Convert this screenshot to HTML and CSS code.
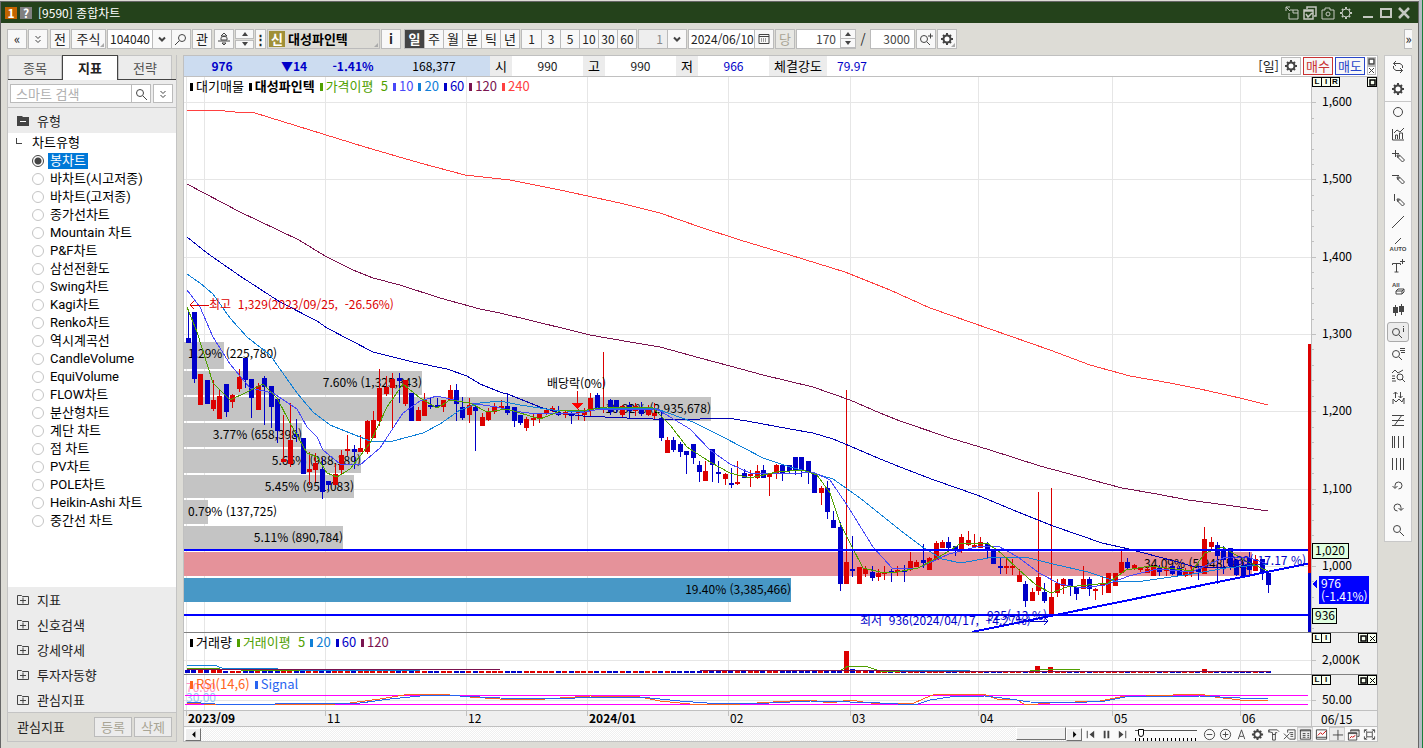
FILE: index.html
```html
<!DOCTYPE html>
<html lang="ko">
<head>
    <meta charset="UTF-8">
    <meta name="viewport" content="width=device-width, initial-scale=1.0">
    <title>[9590] 종합차트</title>
    <link rel="stylesheet" href="styles.css">
</head>
<body>
    <svg class="defs" width="0" height="0">
        <symbol id="gear" viewBox="0 0 14 14"><path d="M7 1v12M1 7h12M3 3l8 8M11 3l-8 8" stroke-width="2"/><circle cx="7" cy="7" r="3.5" stroke-width="2" fill="#fff"/></symbol>
        <symbol id="lens" viewBox="0 0 14 14"><circle cx="6" cy="6" r="3.5"/><path d="M9 9l4 4"/></symbol>
        <symbol id="down" viewBox="0 0 14 14"><path d="M4 5.5l3 3 3-3" stroke-width="2"/></symbol>
        <symbol id="fold" viewBox="0 0 14 14"><path d="M4.500 4l2.500 2.500L9.500 4M4.500 8l2.500 2.500L9.500 8"/></symbol>
        <symbol id="pencil" viewBox="0 0 14 14"><path d="M6 6l2.500 0 5 5-2 2-5-5zM6 8h2v-2"/></symbol>
        <symbol id="folder" viewBox="0 0 12 12"><path d="M.5 1.500h4l1 1h6v8h-11zM3 6.500h6M6 3.500v6"/></symbol>
        <symbol id="max" viewBox="0 0 9 9"><path d="M2 2h5v5H2z" stroke-width="1.500"/></symbol>
        <symbol id="close" viewBox="0 0 9 9"><path d="M2 2l5 5M7 2L2 7"/></symbol>
        <symbol id="up" viewBox="0 0 8 6"><path class="solid" d="M1 5l3-4 3 4z"/></symbol>
        <symbol id="dn" viewBox="0 0 8 6"><path class="solid" d="M1 1l3 4 3-4z"/></symbol>
    </svg>

    <div class="window">
        <header class="titlebar">
            <span class="badge orange">1</span>
            <span class="badge gray">?</span>
            <h1>[9590] 종합차트</h1>
            <div class="title-icons">
                <button aria-label="분리"><svg viewBox="0 0 14 14"><path d="M1 1l4 4M1 5V1h4M5 4h8v9H4V7M8 4v3h5"/></svg></button>
                <button aria-label="목록"><svg viewBox="0 0 14 14"><path d="M4 3V1h9v9h-2M1 4h9v9H1zM1 5h9M3 8l2 3 4-4" stroke-width="1.500"/></svg></button>
                <button aria-label="캡쳐"><svg viewBox="0 0 14 14"><path d="M1 4h3V2h5v2h4v9H1z"/><circle cx="7" cy="8" r="2"/></svg></button>
                <button aria-label="설정"><svg viewBox="0 0 14 14"><circle cx="7" cy="7" r="4"/><path d="M7 1v2M7 11v2M1 7h2M11 7h2M3 3l1 1M11 3l-1 1M3 11l1-1M11 11l-1-1" stroke-width="2"/></svg></button>
                <button class="win" aria-label="최소화"><svg viewBox="0 0 14 14"><path d="M2 11h10" stroke-width="2"/></svg></button>
                <button aria-label="최대화"><svg viewBox="0 0 14 14"><path d="M2 3h10v8H2z" stroke-width="2"/></svg></button>
                <button aria-label="닫기"><svg viewBox="0 0 14 14"><path d="M2 2l10 10M12 2L2 12" stroke-width="2.500"/></svg></button>
            </div>
        </header>

        <div class="toolbar">
            <button class="tb">«</button>
            <button class="tb" aria-label="펼치기"><svg><use href="#fold"/></svg></button>
            <button class="tb gap">전</button>
            <button class="tb wide corner">주식</button>
            <div class="field">
                <input class="code" type="text" value="104040" aria-label="종목코드">
                <button aria-label="종목목록"><svg><use href="#down"/></svg></button>
                <button aria-label="종목검색"><svg class="flip"><use href="#lens"/></svg></button>
            </div>
            <button class="tb">관</button>
            <button class="tb gap" aria-label="알림"><svg viewBox="0 0 14 14"><path d="M7 1L4 4h6zM4 6c0-2 6-2 6 0v2H4zM1 9h12M5 11h4l-2 2z"/></svg></button>
            <div class="spin"><button aria-label="이전"><svg><use href="#up"/></svg></button><button aria-label="다음"><svg><use href="#dn"/></svg></button></div>
            <button class="tb thin">⋮</button>
            <div class="stock corner"><span>신</span><b>대성파인텍</b></div>
            <button class="tb"><b>i</b></button>
            <div class="group">
                <button class="on">일</button><button>주</button><button>월</button><button>분</button><button>틱</button><button>년</button>
            </div>
            <div class="group mins">
                <button>1</button><button>3</button><button>5</button><button>10</button><button>30</button><button>60</button>
            </div>
            <div class="field">
                <select aria-label="주기" disabled><option>1</option></select>
                <button aria-label="주기목록"><svg><use href="#down"/></svg></button>
            </div>
            <div class="field">
                <input class="date" type="text" value="2024/06/10" aria-label="조회일자">
                <button aria-label="달력"><svg viewBox="0 0 14 14"><path d="M2 2.500h10v9H2zM2 4.500h10"/><path d="M4 7h6M4 9h6" stroke-dasharray="1 1"/></svg></button>
            </div>
            <button class="tb" disabled>당</button>
            <div class="field">
                <input class="count" type="text" value="170" aria-label="봉개수">
                <div class="spin small"><button aria-label="증가"><svg><use href="#up"/></svg></button><button aria-label="감소"><svg><use href="#dn"/></svg></button></div>
            </div>
            <span class="slash">/</span>
            <div class="field"><input class="total" type="text" value="3000" aria-label="전체개수"></div>
            <button class="tb" aria-label="확대"><svg viewBox="0 0 14 14"><circle cx="5" cy="7" r="3.500"/><path d="M8 10l3 3M9 4h5M11.500 1.500v5"/></svg></button>
            <button class="tb corner" aria-label="설정"><svg><use href="#gear"/></svg></button>
            <button class="tb more">»</button>
        </div>

        <main>
            <aside class="side">
                <div class="tabs">
                    <button>종목</button><button class="on">지표</button><button>전략</button>
                </div>
                <div class="search">
                    <input type="text" placeholder="스마트 검색" aria-label="스마트 검색">
                    <button aria-label="검색"><svg><use href="#lens"/></svg></button>
                    <button class="fold" aria-label="펼치기"><svg><use href="#fold"/></svg></button>
                </div>
                <div class="side-head"><svg viewBox="0 0 12 12"><path class="solid" d="M0 1h5l1 1h6v9H0z"/><path d="M3 6.500h6" stroke="#fff"/></svg>유형</div>
                <div class="tree">
                    <p>차트유형</p>
                    <label><input type="radio" name="kind" checked><span>봉차트</span></label>
                    <label><input type="radio" name="kind"><span>바차트(시고저종)</span></label>
                    <label><input type="radio" name="kind"><span>바차트(고저종)</span></label>
                    <label><input type="radio" name="kind"><span>종가선차트</span></label>
                    <label><input type="radio" name="kind"><span>Mountain 차트</span></label>
                    <label><input type="radio" name="kind"><span>P&amp;F차트</span></label>
                    <label><input type="radio" name="kind"><span>삼선전환도</span></label>
                    <label><input type="radio" name="kind"><span>Swing차트</span></label>
                    <label><input type="radio" name="kind"><span>Kagi차트</span></label>
                    <label><input type="radio" name="kind"><span>Renko차트</span></label>
                    <label><input type="radio" name="kind"><span>역시계곡선</span></label>
                    <label><input type="radio" name="kind"><span>CandleVolume</span></label>
                    <label><input type="radio" name="kind"><span>EquiVolume</span></label>
                    <label><input type="radio" name="kind"><span>FLOW차트</span></label>
                    <label><input type="radio" name="kind"><span>분산형차트</span></label>
                    <label><input type="radio" name="kind"><span>계단 차트</span></label>
                    <label><input type="radio" name="kind"><span>점 차트</span></label>
                    <label><input type="radio" name="kind"><span>PV차트</span></label>
                    <label><input type="radio" name="kind"><span>POLE차트</span></label>
                    <label><input type="radio" name="kind"><span>Heikin-Ashi 차트</span></label>
                    <label><input type="radio" name="kind"><span>중간선 차트</span></label>
                </div>
                <button class="folder"><svg><use href="#folder"/></svg>지표</button>
                <button class="folder"><svg><use href="#folder"/></svg>신호검색</button>
                <button class="folder"><svg><use href="#folder"/></svg>강세약세</button>
                <button class="folder"><svg><use href="#folder"/></svg>투자자동향</button>
                <button class="folder"><svg><use href="#folder"/></svg>관심지표</button>
                <div class="side-foot"><span>관심지표</span><button disabled>등록</button><button disabled>삭제</button></div>
            </aside>

            <section class="chart">
                <div class="quote">
                    <div class="price"><b>976</b><b>▼14</b><b>-1.41%</b><span>168,377</span></div>
                    <span class="name">시</span><span class="val">990</span>
                    <span class="name">고</span><span class="val">990</span>
                    <span class="name">저</span><span class="val blue">966</span>
                    <span class="name long">체결강도</span><span class="val blue left">79.97</span>
                    <div class="trade">
                        <span>[일]</span>
                        <button aria-label="차트설정"><svg><use href="#gear"/></svg></button>
                        <button class="buy">매수</button>
                        <button class="sell">매도</button>
                        <div class="pair"><button aria-label="최대화"><svg><use href="#max"/></svg></button><button aria-label="닫기"><svg><use href="#close"/></svg></button></div>
                    </div>
                </div>
                <div class="pane price-pane">
                    <svg id="price"></svg>
                    <svg id="priceAxis"></svg>
                    <div class="legend"><span class="c-black">대기매물</span><b class="c-black">대성파인텍</b><span class="c-green">가격이평&nbsp; 5</span><span class="c-violet">10</span><span class="c-sky">20</span><span class="c-navy">60</span><span class="c-wine">120</span><span class="c-red">240</span></div>
                    <div class="lir"><button>L</button><button>I</button><button>R</button><i></i><button aria-label="최대화"><svg><use href="#max"/></svg></button></div>
                </div>
                <div class="pane vol-pane">
                    <svg id="volume"></svg>
                    <svg id="volumeAxis"></svg>
                    <div class="legend"><span class="c-black">거래량</span><span class="c-green">거래이평&nbsp; 5</span><span class="c-sky">20</span><span class="c-navy">60</span><span class="c-wine">120</span></div>
                    <div class="lir"><button>L</button><button>I</button><i></i><button aria-label="최대화"><svg><use href="#max"/></svg></button><button aria-label="닫기"><svg><use href="#close"/></svg></button></div>
                </div>
                <div class="pane rsi-pane">
                    <svg id="rsi"></svg>
                    <svg id="rsiAxis"></svg>
                    <div class="legend"><span class="c-orange">RSI(14,6)</span><span class="c-blue">Signal</span></div>
                    <div class="lir"><button>L</button><button>I</button><i></i><button aria-label="최대화"><svg><use href="#max"/></svg></button><button aria-label="닫기"><svg><use href="#close"/></svg></button></div>
                </div>
                <div class="pane dates">
                    <svg id="dates"></svg>
                    <span>06/15</span>
                </div>
                <div class="scroll">
                    <button class="arrow" aria-label="왼쪽"><svg viewBox="0 0 14 14"><path class="solid" d="M9 3.500v7L5.500 7z"/></svg></button>
                    <div class="track"><div class="thumb"></div></div>
                    <button class="arrow" aria-label="오른쪽"><svg viewBox="0 0 14 14"><path class="solid" d="M5.500 3.500v7L9 7z"/></svg></button>
                    <button aria-label="처음"><svg viewBox="0 0 14 14"><path d="M3.500 3v8"/><path class="solid" d="M11 3v8L6 7z"/></svg></button>
                    <button aria-label="정지"><svg viewBox="0 0 14 14"><path d="M5 3v8M9 3v8" stroke-width="2"/></svg></button>
                    <button aria-label="끝"><svg viewBox="0 0 14 14"><path d="M10.500 3v8"/><path class="solid" d="M3 3v8l5-4z"/></svg></button>
                    <input type="range" min="0" max="20" value="1" aria-label="속도">
                    <button aria-label="축소"><svg viewBox="0 0 14 14"><circle cx="7" cy="7" r="5.500"/><path d="M4 7h6"/></svg></button>
                    <button aria-label="확대"><svg viewBox="0 0 14 14"><circle cx="7" cy="7" r="5.500"/><path d="M4 7h6M7 4v6"/></svg></button>
                    <button aria-label="글자"><svg viewBox="0 0 14 14"><path d="M3.500 12L7 2l3.500 10M5 9h4"/></svg></button>
                    <button aria-label="설정"><svg><use href="#gear"/></svg></button>
                    <button aria-label="도구"><svg viewBox="0 0 14 14"><path d="M2 5V2h9l2 2M2 2v2l4 1v8h3V5h2M9 7H6"/></svg></button>
                    <button aria-label="엑셀"><svg viewBox="0 0 14 14"><path d="M5 5V2h8v10H7M7 5h4M8 7h3M8 9h3M1 6l6 6M7 6l-6 6"/></svg></button>
                    <button class="on" aria-label="표"><svg viewBox="0 0 14 14"><path d="M1.500 2h11v10h-11zM1 3h12M4 6h3M4 8h3M4 10h3M9 6h2M9 8h2M9 10h2"/></svg></button>
                    <button aria-label="수식"><svg viewBox="0 0 14 14"><path d="M1.500 2h11v10h-11zM1 10h12"/><path d="M3 8l3-3 2 2 4-4" stroke="#c00"/></svg></button>
                    <button class="on" aria-label="십자선"><svg viewBox="0 0 14 14"><path d="M7.500 2v11M2 7.500h11"/></svg></button>
                    <button aria-label="복사"><svg viewBox="0 0 14 14"><path d="M4 4V2h9v7h-2M4 3h9M1.500 5h9v8h-9zM1 6h10"/><path d="M3 11l2-2 1 1 3-2" stroke="#c00"/></svg></button>
                    <button aria-label="전체화면"><svg viewBox="0 0 14 14"><path d="M1.500 5V2h3M9.500 2h3v3M12.500 9v3h-3M4.500 12h-3V9M4 4.500h6v5H4zM2 2l2 2M12 2l-2 2M2 12l2-2M12 12l-2-2"/></svg></button>
                </div>
            </section>

            <nav class="tools">
                <button aria-label="새로고침"><svg viewBox="0 0 14 14"><path d="M5 1L2.500 3.500 5 6M2.500 3.500H9l2.500 2V8M2.500 6v2.500l2.500 2h6.500M9 8l2.500 2.500L9 13"/></svg></button>
                <button aria-label="설정"><svg><use href="#gear"/></svg></button>
                <hr>
                <button aria-label="원"><svg viewBox="0 0 14 14"><circle cx="7" cy="7" r="4.500"/></svg></button>
                <button aria-label="지표추가"><svg viewBox="0 0 14 14"><path d="M1.500 2v11H13M3 6l3-3 3 2 4-4M4.500 12V8h2v4M8.500 12V6h3v6"/></svg></button>
                <button aria-label="십자선 긋기"><svg viewBox="0 0 14 14"><path d="M1 4.500h7M4.500 1v7"/><use href="#pencil"/></svg></button>
                <button aria-label="수평선"><svg viewBox="0 0 14 14"><path d="M1 4.500h7"/><use href="#pencil"/></svg></button>
                <button aria-label="수직선"><svg viewBox="0 0 14 14"><path d="M3.500 1v7"/><use href="#pencil"/></svg></button>
                <button aria-label="추세선"><svg viewBox="0 0 14 14"><path d="M1 13L13 1"/></svg></button>
                <button aria-label="자동추세선"><svg class="auto" viewBox="0 0 18 14"><path d="M6 7l6-6"/><text x="9" y="14" text-anchor="middle">AUTO</text></svg></button>
                <button aria-label="텍스트"><svg viewBox="0 0 14 14"><path d="M1.500 6V4.500h8V6M5.500 4.500V13M3.500 13h4M9 2.500h5M11.500 0v5"/></svg></button>
                <button aria-label="전체삭제"><svg viewBox="0 0 14 14"><text x="1" y="6">All</text><path d="M7 8h6v3l-2 2H5v-3zM5 10h6v3M11 10l2-2"/></svg></button>
                <button aria-label="봉"><svg viewBox="0 0 14 14"><path d="M4.500 2v11M10.500 1v11"/><path class="solid" d="M2 4h5v6H2zM8 3h5v6H8z"/></svg></button>
                <button class="on" aria-label="정보"><svg viewBox="0 0 14 14"><circle cx="5" cy="7" r="3.500"/><path d="M8 10l3 3M12.500 1v1M12.500 3v4"/></svg></button>
                <button aria-label="목록검색"><svg viewBox="0 0 14 14"><circle cx="5" cy="7" r="3.500"/><path d="M8 10l3 3M9 1.500h5M9 3.500h5M10 5.500h4"/></svg></button>
                <button aria-label="차트검색"><svg viewBox="0 0 14 14"><path d="M1 4l3-3 3 3 5-3M1 7h3M1 9.500h3M1 12h4"/><circle cx="9" cy="8" r="3"/><path d="M11 10l3 3"/></svg></button>
                <button aria-label="상하"><svg viewBox="0 0 14 14"><path d="M2 13V8l3 3 3-3 3 3 2-4v6M4.500 1v6M2.500 3l2-2 2 2M9.500 1v6M7.500 5l2 2 2-2"/></svg></button>
                <button aria-label="피보나치"><svg viewBox="0 0 14 14"><path d="M1 2.500h12M1 7.500h12M1 12.500h12M11 2L3 13"/></svg></button>
                <button aria-label="시간대"><svg viewBox="0 0 14 14"><path d="M1.500 1v12M3.500 1v12M7.500 1v12M12.500 1v12"/></svg></button>
                <button aria-label="등간격"><svg viewBox="0 0 14 14"><path d="M1.500 1v12M5.500 1v12M9.500 1v12M12.500 1v12"/></svg></button>
                <button aria-label="되돌리기"><svg viewBox="0 0 14 14"><path d="M4 9V6.500A3.500 3.500 0 1 1 7.500 10M1.500 7l2.500 2.500L6.500 7"/></svg></button>
                <button aria-label="다시실행"><svg viewBox="0 0 14 14"><path d="M10 9V6.500A3.500 3.500 0 1 0 6.500 10M7.500 7l2.500 2.500L12.500 7"/></svg></button>
                <button aria-label="돋보기"><svg><use href="#lens"/></svg></button>
            </nav>
        </main>
    </div>
    <script src="chart.js"></script>
</body>
</html>
```
FILE: styles.css
```css
* {
    box-sizing: border-box;
}
body {
    margin: 0;
    height: 100vh;
    padding: 1px 4px 0 0;
    background: linear-gradient(to left, #18803c 1px, #b4bcc4 1px, #b4bcc4 4px, #dddcd6 4px);
    font-family: "Noto Sans CJK KR", sans-serif;
    font-size: 13px;
    line-height: 16px;
    color: #222;
}
button, input, select {
    font: inherit;
    color: inherit;
    margin: 0;
    padding: 0;
    border: 0;
    border-radius: 0;
    background: none;
}
button {
    display: flex;
    align-items: center;
    justify-content: center;
    white-space: nowrap;
}
svg {
    fill: none;
    stroke: #444;
    stroke-width: 1;
    width: 14px;
    height: 14px;
    flex: none;
}
.solid {
    fill: #444;
    stroke: none;
}
.defs {
    position: absolute;
}
.window {
    height: 100%;
    display: flex;
    flex-direction: column;
    background: #dddcd6;
    border: 1px solid #666;
    border-width: 1px 1px 0 1px;
}

/* title bar */
.titlebar {
    height: 21px;
    display: flex;
    align-items: center;
    gap: 3px;
    padding: 0 7px 0 4px;
    background: #24421b;
    color: #fff;
}
.badge {
    width: 12px;
    height: 12px;
    line-height: 12px;
    text-align: center;
    font-weight: bold;
    font-size: 12px;
}
.orange {
    background: #c46400;
}
.gray {
    background: #808080;
}
h1 {
    margin: 0 0 0 3px;
    font-size: 12px;
    font-weight: normal;
}
.title-icons {
    margin-left: auto;
    display: flex;
    gap: 4px;
}
.title-icons svg {
    stroke: #c4c8c0;
}
.title-icons .win {
    margin-left: 4px;
}

/* toolbar */
.toolbar {
    height: 32px;
    display: flex;
    align-items: center;
    gap: 1px;
    padding-left: 6px;
    flex: none;
}
.tb, .field, .stock, .group {
    height: 20px;
    background: #f8f8f8;
    border: 1px solid #bbb;
    flex: none;
}
.tb {
    width: 20px;
}
.tb:disabled {
    color: #a8a494;
    background: #e8e8e4;
}
.gap {
    margin-left: 1px;
}
.wide {
    width: 35px;
}
.thin {
    width: 11px;
    font-weight: bold;
}
.corner {
    position: relative;
}
.corner::after {
    content: "";
    position: absolute;
    right: 1px;
    bottom: 1px;
    border: 2px solid #aaa;
    border-left-color: transparent;
    border-top-color: transparent;
}
.field, .group {
    display: flex;
    background: #fff;
}
.field > button, .group button {
    width: 19px;
    border-left: 1px solid #bbb;
    background: #f8f8f8;
}
.field {
    font-size: 12px;
}
.group {
    margin-left: 2px;
}
.mins {
    margin-left: 0;
    font-size: 12px;
}
.group button:first-child {
    border-left: 0;
}
.group .on {
    background: #444;
    color: #fff;
    font-weight: bold;
}
.code {
    width: 44px;
    padding-left: 2px;
}
.flip {
    transform: scaleX(-1);
}
.date {
    width: 65px;
    padding-left: 2px;
}
.count, .total {
    width: 43px;
    padding-right: 4px;
    text-align: right;
    color: #444;
}
.field select {
    appearance: none;
    width: 28px;
    padding-right: 4px;
    text-align: right;
    text-align-last: right;
    background: #eee;
    color: #888;
    opacity: 1;
}
.spin {
    width: 19px;
    height: 20px;
    display: flex;
    flex-direction: column;
    gap: 1px;
    flex: none;
}
.spin button {
    height: 9px;
    flex: 1;
    background: #f8f8f8;
    border: 1px solid #bbb;
}
.spin svg {
    width: 8px;
    height: 6px;
}
.small {
    width: 15px;
    height: 18px;
    gap: 0;
}
.small button {
    border-width: 0 0 1px 1px;
}
.stock {
    width: 113px;
    display: flex;
    align-items: center;
    gap: 3px;
    padding-left: 1px;
    background: #dddcd6;
    color: #000;
}
.stock span {
    width: 16px;
    height: 16px;
    background: #a09038;
    color: #fff;
    text-align: center;
    font-weight: bold;
}
.slash {
    width: 12px;
    text-align: center;
}
.more {
    width: 8px;
    margin-left: auto;
    margin-right: 6px;
    border-right: 0;
}

main {
    flex: 1;
    min-height: 0;
    display: flex;
    gap: 6px;
    padding: 0 6px 6px;
}

/* left panel */
.side {
    width: 170px;
    display: flex;
    flex-direction: column;
    border: 1px solid #c4c4c4;
    border-top: 0;
    background: #ececec;
    flex: none;
}
.tabs {
    height: 25px;
    display: flex;
    background: #dddcd6;
    border-bottom: 1px solid #444;
    flex: none;
}
.tabs button {
    width: 54px;
    background: #ececec;
    border: 1px solid #c4c4c4;
    border-bottom: 0;
    color: #555;
}
.tabs .on {
    width: 56px;
    height: 25px;
    background: #fff;
    border-color: #444;
    color: #222;
    font-weight: bold;
}
.search {
    height: 28px;
    display: flex;
    padding: 4px 3px 4px 2px;
    border-bottom: 1px solid #c4c4c4;
    flex: none;
}
.search input {
    width: 122px;
    padding-left: 5px;
    background: #fff;
    border: 1px solid #bbb;
}
.search input::placeholder {
    color: #b0b0b0;
}
.search button {
    width: 20px;
    border: 1px solid #bbb;
    border-left: 0;
    background: #fff;
}
.search .fold {
    margin-left: 2px;
    border-left: 1px solid #bbb;
}
.side-head, .folder {
    height: 25px;
    display: flex;
    align-items: center;
    justify-content: flex-start;
    gap: 8px;
    padding-left: 9px;
    flex: none;
}
.side-head svg, .folder svg {
    width: 12px;
    height: 12px;
}
.tree {
    flex: 1;
    min-height: 0;
    padding-top: 1px;
    overflow: hidden;
    background: #fff;
    font-family: Roboto, "Noto Sans CJK KR", sans-serif;
    color: #000;
}
.tree p {
    position: relative;
    margin: 0;
    padding-left: 24px;
    line-height: 18px;
}
.tree p::before {
    content: "";
    position: absolute;
    left: 8px;
    top: 4px;
    width: 5px;
    height: 5px;
    border: 1px solid #444;
    border-width: 0 0 1px 1px;
}
.tree label {
    height: 18px;
    display: flex;
    align-items: center;
    gap: 4px;
    padding-left: 24px;
}
.tree span {
    padding: 0 2px;
}
.tree input {
    appearance: none;
    width: 12px;
    height: 12px;
    border: 1px solid #c4c4c4;
    border-radius: 50%;
}
.tree input:checked {
    border-color: #444;
    background: radial-gradient(#444 3px, #fff 4px);
}
.tree input:checked + span {
    background: #0078d7;
    color: #fff;
}
.side-foot {
    height: 29px;
    display: flex;
    align-items: center;
    gap: 2px;
    padding: 0 4px 0 9px;
    background: #dddcd6;
    border-top: 1px solid #c4c4c4;
    flex: none;
}
.side-foot span {
    flex: 1;
}
.side-foot button {
    width: 38px;
    height: 20px;
    border: 1px solid #bbb;
    background: #ececec;
    color: #a8a494;
}

/* chart */
.chart {
    flex: 1;
    min-width: 0;
    display: flex;
    flex-direction: column;
    border: 1px solid #c0c0c0;
    background: #fff;
}
.quote {
    height: 21px;
    display: flex;
    border-bottom: 1px solid #c0c0c0;
    font-size: 12px;
    line-height: 20px;
    text-align: center;
    flex: none;
}
.price {
    width: 306px;
    display: grid;
    grid-template-columns: 76px 68px 50px 112px;
    background: #ccdcf0;
    color: #000;
}
.price b, .blue {
    color: #0000c8;
}
.name {
    width: 22px;
    background: #ececec;
    font-size: 13px;
    color: #000;
}
.val {
    width: 71px;
}
.long {
    width: 58px;
}
.left {
    text-align: left;
    padding-left: 10px;
}
.trade {
    margin-left: auto;
    display: flex;
    align-items: center;
    gap: 2px;
    padding-right: 1px;
    font-size: 13px;
}
.trade > button {
    width: 30px;
    height: 18px;
    border: 1px solid #bbb;
    background: #f8f8f8;
}
.trade > button:nth-child(2) {
    width: 20px;
}
.trade .buy {
    border-color: #c83232;
    color: #c83232;
}
.trade .sell {
    border-color: #2846c8;
    color: #2846c8;
}
.pair button {
    width: 9px;
    height: 9px;
    border: 1px solid #bbb;
}
.pair svg, .lir svg {
    width: 9px;
    height: 9px;
}
.pane {
    position: relative;
    display: grid;
    grid-template-columns: 1fr 66px;
    flex: none;
}
.pane > svg {
    width: 100%;
    height: 100%;
    min-height: 0;
    stroke: none;
    overflow: hidden;
    shape-rendering: crispEdges;
}
.pane > svg:nth-child(2) {
    background: #efefef;
    border-left: 1px solid #c0c0c0;
}
.pane text {
    font-size: 12px;
    fill: #000;
}
.price-pane {
    flex: 1;
    min-height: 0;
}
.vol-pane {
    height: 42px;
    border-top: 1px solid #808080;
}
.rsi-pane {
    height: 36px;
    border-top: 1px solid #808080;
}
.legend {
    position: absolute;
    left: 6px;
    top: 1px;
    display: flex;
    gap: 5px;
    color: #000;
}
.legend > *::before {
    content: "";
    display: inline-block;
    width: 3px;
    height: 8px;
    margin-right: 3px;
    background: currentColor;
}
.c-black { color: #000; }
.c-green { color: #50a000; }
.c-violet { color: #4848f8; }
.c-sky { color: #1080d8; }
.c-navy { color: #0000c8; }
.c-wine { color: #7a1450; }
.c-red { color: #ff4040; }
.c-orange { color: #ff6420; }
.c-blue { color: #2864f0; }
.lir {
    position: absolute;
    right: 0;
    top: 0;
    width: 65px;
    display: flex;
}
.lir button {
    width: 10px;
    height: 10px;
    margin-right: -1px;
    border: 1px solid #000;
    background: #f8fff0;
    font-family: "Liberation Sans", sans-serif;
    font-size: 8px;
    font-weight: bold;
    line-height: 8px;
    color: #000;
}
.lir svg {
    stroke: #000;
}
.lir button:last-child {
    margin-right: 0;
}
.lir i {
    flex: 1;
}
.dates {
    height: 17px;
    background: #efefef;
    border-top: 1px solid #c0c0c0;
    border-bottom: 1px solid #c0c0c0;
    font-size: 12px;
    line-height: 15px;
}
.pane > #dates {
    overflow: visible;
}
.dates span {
    padding-left: 9px;
    border-left: 1px solid #c0c0c0;
    color: #000;
}
.scroll {
    height: 14px;
    display: flex;
    align-items: center;
    padding-left: 1px;
    background: #fafafa;
    flex: none;
}
.scroll button {
    width: 16px;
    height: 14px;
}
.scroll svg {
    width: 13px;
    height: 13px;
}
.scroll .on {
    background: #ececec;
    border: 1px solid #ccc;
}
.scroll .arrow, .thumb {
    height: 13px;
    background: #efefef;
    border: 1px solid #fff;
    border-right-color: #707070;
    border-bottom-color: #707070;
}
.arrow .solid {
    fill: #000;
}
.track {
    flex: 1;
    height: 14px;
    background: repeating-conic-gradient(#efefef 0 25%, #fff 0 50%) 0 0 / 2px 2px;
}
.thumb {
    width: 50px;
    margin-left: auto;
}
.scroll input {
    appearance: none;
    width: 62px;
    height: 14px;
    margin: 0 4px 0 5px;
    background: linear-gradient(#555, #555) 0 3px / 100% 1px no-repeat, repeating-linear-gradient(to right, #000 0 1px, transparent 1px 4px) 0 100% / 100% 3px no-repeat;
}
.scroll input::-webkit-slider-thumb {
    appearance: none;
    width: 6px;
    height: 8px;
    margin-top: -3px;
    background: #fff;
    border: 1px solid #000;
    border-radius: 0 0 3px 3px;
}

/* drawing tools */
.tools {
    width: 28px;
    align-self: flex-start;
    padding: 1px 0;
    background: #fafafa;
    border: 1px solid #c8c8c8;
    flex: none;
}
.tools button {
    width: 22px;
    height: 20px;
    margin: 0 2px 2px;
    border: 1px solid transparent;
    border-radius: 3px;
}
.tools button:last-child {
    margin-bottom: 0;
}
.tools .on {
    border-color: #aaa;
    background: #ececec;
}
.tools hr {
    margin: 0;
    border: 0;
    border-top: 1px solid #c8c8c8;
}
.tools .auto {
    width: 18px;
}
.tools text {
    font-family: "Liberation Sans", sans-serif;
    font-size: 6px;
    font-weight: bold;
    fill: #444;
    stroke: none;
}
```
FILE: chart.js
```js
// Base grid of the drawing. Everything is scaled from it to the real pane size.
const BASE = { left: 184, width: 1127, top: 77, height: 555 };

const RED = '#dc0000';
const BLUE = '#0000c8';
const months = [186, 204, 325, 466, 587, 728, 850, 978, 1112, 1240];

// direction, high, body top, body bottom, low
const candles = `B 312 338 343 343|B 312 312 379 383|R 374 374 405 405|B 380 380 404 404|R 380 400 409 411|R 389 396 419 419|B 384 384 412 417|R 394 395 402 408|R 369 377 389 392|B 358 358 380 388
B 379 379 398 418|R 383 386 410 410|B 376 378 387 425|B 386 386 407 428|B 399 399 431 443|R 415 459 462 462|R 403 440 464 467|B 419 434 437 442|B 438 438 474 474|R 452 469 472 485
R 453 463 470 482|B 458 469 492 499|B 481 481 485 490|R 464 474 485 485|R 450 455 470 475|R 435 449 451 456|B 445 449 452 469|R 435 448 452 452|R 420 421 452 454|R 411 420 438 438
R 369 388 421 426|R 376 387 394 396|R 373 379 388 430|B 373 378 381 403|R 380 380 404 406|B 393 393 421 421|R 407 410 421 421|R 393 400 416 416|B 397 405 407 409|B 398 405 407 407
R 400 400 407 412|R 385 390 401 401|B 384 390 404 421|B 397 407 418 420|R 398 405 415 423|B 406 407 411 451|R 413 417 426 426|R 408 411 420 421|R 403 406 412 414|R 400 406 407 410
B 393 406 413 415|B 407 407 421 427|B 415 415 423 425|R 417 419 428 431|R 413 418 420 426|R 413 413 418 423|R 409 410 413 415|R 406 408 410 412|B 406 412 415 416|R 410 412 415 418
B 411 413 416 424|R 409 411 413 420|R 408 411 415 421|R 393 398 411 416|B 393 395 408 409|R 352 408 410 413|B 399 400 412 415|B 400 400 407 413|R 405 406 415 417|B 402 405 411 418
R 403 406 411 416|B 402 407 414 416|R 405 407 415 416|R 403 413 416 420|B 412 418 438 441|R 437 440 453 453|B 437 440 450 452|B 442 444 452 457|B 451 451 455 474|B 444 444 458 464
B 461 465 472 482|R 461 471 481 481|B 449 449 465 482|B 461 472 474 483|R 473 474 479 485|B 468 483 485 488|R 461 482 484 485|B 469 473 478 478|R 470 474 475 487|R 465 471 478 479
B 465 470 478 478|R 473 474 477 496|R 464 465 474 479|B 465 465 474 481|B 465 465 471 474|B 457 457 470 475|B 457 457 470 477|B 461 461 473 484|B 473 473 493 493|R 486 488 493 505
B 481 488 512 519|B 511 520 528 528|B 522 527 584 591|R 390 562 584 584|B 536 569 571 577|R 567 567 584 584|R 566 569 574 577|B 566 572 578 581|R 569 573 577 581|R 566 572 574 580
B 569 571 572 582|R 566 570 572 576|B 565 570 572 582|R 552 561 570 571|R 560 562 567 567|B 544 560 563 568|R 557 558 570 570|R 541 543 560 560|R 540 542 548 548|B 537 542 548 550
B 546 546 551 556|R 534 537 551 553|R 531 540 545 546|R 534 545 546 548|R 537 542 548 548|B 542 544 551 558|B 550 551 564 564|B 558 566 568 574|R 558 566 568 574|R 559 566 568 575
R 569 575 582 582|B 581 584 601 607|R 588 592 601 601|R 492 577 591 595|B 583 592 601 603|R 488 597 615 615|R 579 583 593 597|R 578 579 586 594|B 579 579 587 596|B 587 587 594 600
R 566 579 589 589|B 577 579 589 596|R 588 589 590 600|R 576 583 584 595|R 573 573 593 593|R 573 573 586 586|R 551 562 573 573|B 558 562 568 570|R 564 565 568 570|R 568 568 570 572
R 566 569 573 573|R 565 567 576 576|B 565 568 572 576|R 566 568 571 576|B 565 566 574 575|B 566 568 576 576|R 568 572 576 577|R 566 570 574 577|B 566 569 572 580|R 527 539 574 574
R 537 542 547 549|B 542 545 556 584|B 546 550 560 574|B 548 548 566 570|B 559 560 575 576|B 562 565 576 576|B 552 558 570 575|R 555 559 571 571|B 559 559 573 580|B 573 573 585 593`
    .split(/[|\n]/).map(row => row.split(' '));

const averages = [
    ['#ff4040', '187,110 215,110 235,112 255,113 310,130 365,147 420,163 465,175 510,180 560,190 620,203 660,213 700,227 740,240 790,255 845,272 890,290 930,308 970,322 1010,336 1050,350 1090,365 1130,376 1170,383 1200,389 1240,398 1268,405'],
    ['#7a1450', '187,184 240,212 299,240 325,256 353,270 373,278 400,285 440,298 480,309 500,313 570,330 590,335 630,342 660,347 700,358 730,366 763,375 813,387 850,400 880,413 900,421 950,438 990,450 1040,466 1092,480 1122,488 1157,494 1188,500 1226,505 1268,511'],
    ['#0000b4', '187,237 207,253 240,276 280,302 317,321 327,328 373,352 413,362 447,369 467,376 480,384 500,392 510,395 540,407 560,413 583,416 627,418 653,419 700,419 727,418 747,421 790,429 813,433 833,439 850,446 873,456 900,467 934,480 977,495 1018,512 1053,526 1102,543 1129,549 1174,561 1192,566 1216,568 1268,564'],
    ['#1080d8', '187,274 200,283 213,294 230,318 247,337 270,355 297,393 313,412 330,425 350,433 370,441 393,441 423,433 440,424 460,410 480,403 500,401 520,405 553,410 580,412 597,408 657,409 693,422 723,437 763,458 790,467 813,473 833,479 860,498 900,530 921,546 942,559 961,563 994,557 1025,557 1053,564 1088,572 1115,581 1143,581 1192,574 1226,568 1268,564'],
    ['#4848f8', '187,290 200,307 213,337 230,364 250,388 273,393 297,409 307,427 317,437 323,450 340,464 360,465 380,448 403,413 420,401 437,396 463,402 497,407 513,411 537,414 580,413 600,409 657,409 670,417 690,429 710,450 730,464 750,473 790,474 813,472 830,480 847,505 873,547 893,569 918,568 949,554 980,546 998,546 1018,557 1039,573 1060,584 1081,588 1105,585 1129,576 1157,569 1192,572 1209,564 1226,557 1247,557 1268,564'],
    ['#50a000', '187,307 197,332 213,383 230,400 247,392 263,384 277,398 290,423 307,453 317,457 327,473 337,477 350,469 370,443 387,407 403,384 420,398 437,408 450,400 470,403 487,412 507,409 540,419 563,410 587,410 607,407 653,408 670,425 687,447 710,462 730,473 750,478 777,472 803,470 817,475 830,493 840,523 850,543 863,568 880,572 897,572 918,568 939,557 960,544 987,543 1001,553 1018,569 1036,585 1051,593 1067,587 1088,585 1108,583 1126,570 1150,566 1192,571 1205,553 1223,547 1244,560 1261,568 1268,571']
];

// top, height, right edge, colour, label, label start (when it does not end at the bar)
const profile = [
    [342, 27, 224, '#c4c4c4', '1.29% (225,780)', 188],
    [371, 24, 422, '#c4c4c4', '7.60% (1,325,343)'],
    [397, 24, 711, '#c4c4c4', '16.82% (2,935,678)'],
    [423, 24, 302, '#c4c4c4', '3.77% (658,398)'],
    [449, 24, 361, '#c4c4c4', '5.66% (988,189)'],
    [475, 23, 354, '#c4c4c4', '5.45% (951,083)'],
    [500, 24, 208, '#c4c4c4', '0.79% (137,725)', 188],
    [526, 24, 343, '#c4c4c4', '5.11% (890,784)'],
    [552, 24, 1252, '#e5929a', '34.09% (5,948,501)', 1144],
    [578, 24, 791, '#4898c6', '19.40% (3,385,466)']
];

const spikes = { 103: 651, 104: 669, 133: 666, 135: 667, 159: 669 };

function draw() {
    const price = document.getElementById('price');
    const sx = price.clientWidth / BASE.width;
    const sy = price.clientHeight / BASE.height;
    const X = v => Math.round((v - BASE.left) * sx);
    const Y = v => Math.round((v - BASE.top) * sy);

    const rect = (x, y, w, h, fill, extra = '') => `<rect x="${x}" y="${y}" width="${w}" height="${h}" fill="${fill}" ${extra}/>`;
    const text = (x, y, s, fill = '#000', extra = '') => `<text x="${x}" y="${y}" style="fill:${fill}" ${extra}>${s}</text>`;
    const line = (points, color, width, fy) => {
        const p = points.split(' ').map(s => s.split(',')).map(([x, y]) => X(x) + ',' + fy(y)).join(' ');
        return `<polyline points="${p}" fill="none" stroke="${color}" stroke-width="${width}"/>`;
    };
    const columns = h => months.map(m => rect(X(m), 0, 1, h, '#e6e6e6')).join('');
    const show = (id, svg) => { document.getElementById(id).innerHTML = svg; };

    // price pane
    let out = columns(price.clientHeight);
    for (let i = 0; i < 7; i++) out += rect(0, Y(102 + i * 77.3), price.clientWidth, 1, '#e6e6e6');
    profile.forEach(([y, h, right, color]) => {
        out += rect(0, Y(y), X(right), Math.round(h * sy), color);
    });
    profile.forEach(([y, h, right, color, label, start]) => {
        out += start ? text(X(start), Y(y + 16), label) : text(X(right), Y(y + 16), label, '#000', 'text-anchor="end"');
    });
    candles.forEach(([dir, hi, top, bottom, low], i) => {
        const x = X(187.500 + i * 6.394);
        const color = dir === 'R' ? RED : BLUE;
        out += rect(x, Y(hi), 1, Math.max(Y(low) - Y(hi), 1), color);
        out += rect(x - 2, Y(top), 5, Math.max(Y(bottom) - Y(top), 2), color);
    });
    averages.forEach(([color, points]) => { out += line(points, color, 1, Y); });
    out += rect(0, Y(549), price.clientWidth, 2, '#0000ff');
    out += rect(0, Y(614), price.clientWidth, 2, '#0000ff');
    out += line('972,632 1311,563', '#0000ff', 2, Y);
    out += rect(X(1308), Y(344), 3, Y(573) - Y(344), RED);
    out += rect(X(1308), Y(573), 3, Y(632) - Y(573), BLUE);
    out += line('190,305 209,305', RED, 1, Y) + line('194,301 190,305 194,309', RED, 1, Y);
    out += text(X(209), Y(309), '최고&nbsp; 1,329(2023/09/25,&nbsp; -26.56%)', RED);
    out += text(X(547), Y(388), '배당락(0%)');
    out += rect(X(577), Y(391), 1, 13, RED);
    out += `<path d="M${X(572)} ${Y(403)}h11l-5.500 6z" fill="#ff0000"/>`;
    out += text(X(860), Y(625), '최저&nbsp; 936(2024/04/17,&nbsp; +4.27%)', BLUE);
    out += line('1030,621 1048,621', BLUE, 1, Y) + line('1044,617 1048,621 1044,625', BLUE, 1, Y);
    out += text(X(987), Y(620), '925(-13 %)', BLUE);
    out += text(X(1306), Y(565), '939(-17.17 %)', BLUE, 'text-anchor="end"');
    show('price', out);

    // price axis
    out = '';
    for (let i = 0; i < 7; i++) {
        const y = 102 + i * 77.3;
        out += rect(0, Y(y), 4, 1, '#c0c0c0') + text(10, Y(y) + 4, (1.6 - i / 10).toFixed(1).replace('.', ',') + '00');
        for (let k = 1; k < 5; k++) out += rect(0, Y(y + k * 15.5), 2, 1, '#c0c0c0');
    }
    const boxed = (y, w, s) => rect(0, Y(y), w, 15, '#e0ffe0', 'stroke="#000"') + text(3, Y(y) + 12, s);
    out += boxed(543, 36, '1,020') + boxed(608, 24, '936');
    out += `<path d="M0 ${Y(584)}l5-5v10z" fill="#0000ff"/>`;
    out += rect(7, Y(576), 50, 28, '#0000ff') + text(9, Y(576) + 12, '976', '#fff') + text(9, Y(576) + 25, '(-1.41%)', '#fff');
    show('priceAxis', out);

    // volume pane, 41px high
    const V = v => v - 633;
    out = columns(41) + rect(0, V(660), price.clientWidth, 1, '#e6e6e6');
    candles.forEach(([dir], i) => {
        const y = spikes[i] || (i < 6 ? 670 : 671);
        out += rect(X(185 + i * 6.394), V(y), 5, 673 - y, dir === 'R' ? RED : BLUE);
    });
    out += line('187,665 214,665 222,668 255,668 300,670 420,670', '#1080d8', 1, V);
    out += line('187,669 200,668 240,670 300,671 840,671 848,666 868,667 880,671 1030,671 1050,669 1080,670', '#50a000', 1, V);
    out += line('846,670 970,670', '#1080d8', 1, V);
    out += line('187,669 400,669 500,670 700,670 900,671 1270,671', '#7a1450', 1, V);
    show('volume', out);
    show('volumeAxis', rect(0, V(660), 4, 1, '#c0c0c0') + text(10, V(664), '2,000K'));

    // rsi pane, 35px high
    const R = v => v - 675;
    out = columns(35) + rect(0, R(700), price.clientWidth, 1, '#e6e6e6');
    out += text(X(186), R(692), '70.00', '#ff96c8') + text(X(186), R(702), '30.00', '#96c8f8');
    out += rect(X(185), R(695), X(1308) - X(185), 1, '#ff00ff') + rect(X(185), R(704), X(1308) - X(185), 1, '#ff00ff');
    out += line('187,703 220,705 255,704 335,704 350,703 380,699 410,694 440,694 470,697 500,699 530,700 560,698 590,696 640,697 660,701 690,704 740,704 790,701 810,700 830,703 850,700 870,703 912,704 925,698 933,695 960,694 983,694 1000,700 1015,699 1026,705 1050,703 1100,701 1120,697 1200,694 1215,697 1240,700 1268,700', '#ff6420', 1, R);
    out += line('187,702 215,704 250,705 300,703 360,703 390,699 430,695 460,696 500,698 550,699 600,697 640,697 680,701 720,704 770,703 810,701 850,702 880,703 915,705 930,700 950,697 985,696 1010,699 1030,702 1070,703 1105,701 1125,697 1200,696 1240,698 1268,699', '#2864f0', 1, R);
    show('rsi', out);
    show('rsiAxis', rect(0, R(700), 4, 1, '#c0c0c0') + text(10, R(704), '50.00'));

    // dates
    const names = ['2023/09', '', '11', '12', '2024/01', '02', '03', '04', '05', '06'];
    show('dates', months.map((m, i) => names[i] &&
        rect(X(m), 0, 1, 5, '#c0c0c0') + text(X(m) + 2, 12, names[i], '#000', names[i].length > 2 ? 'font-weight="bold"' : '')).join(''));
}

draw();
window.addEventListener('resize', draw);
```
